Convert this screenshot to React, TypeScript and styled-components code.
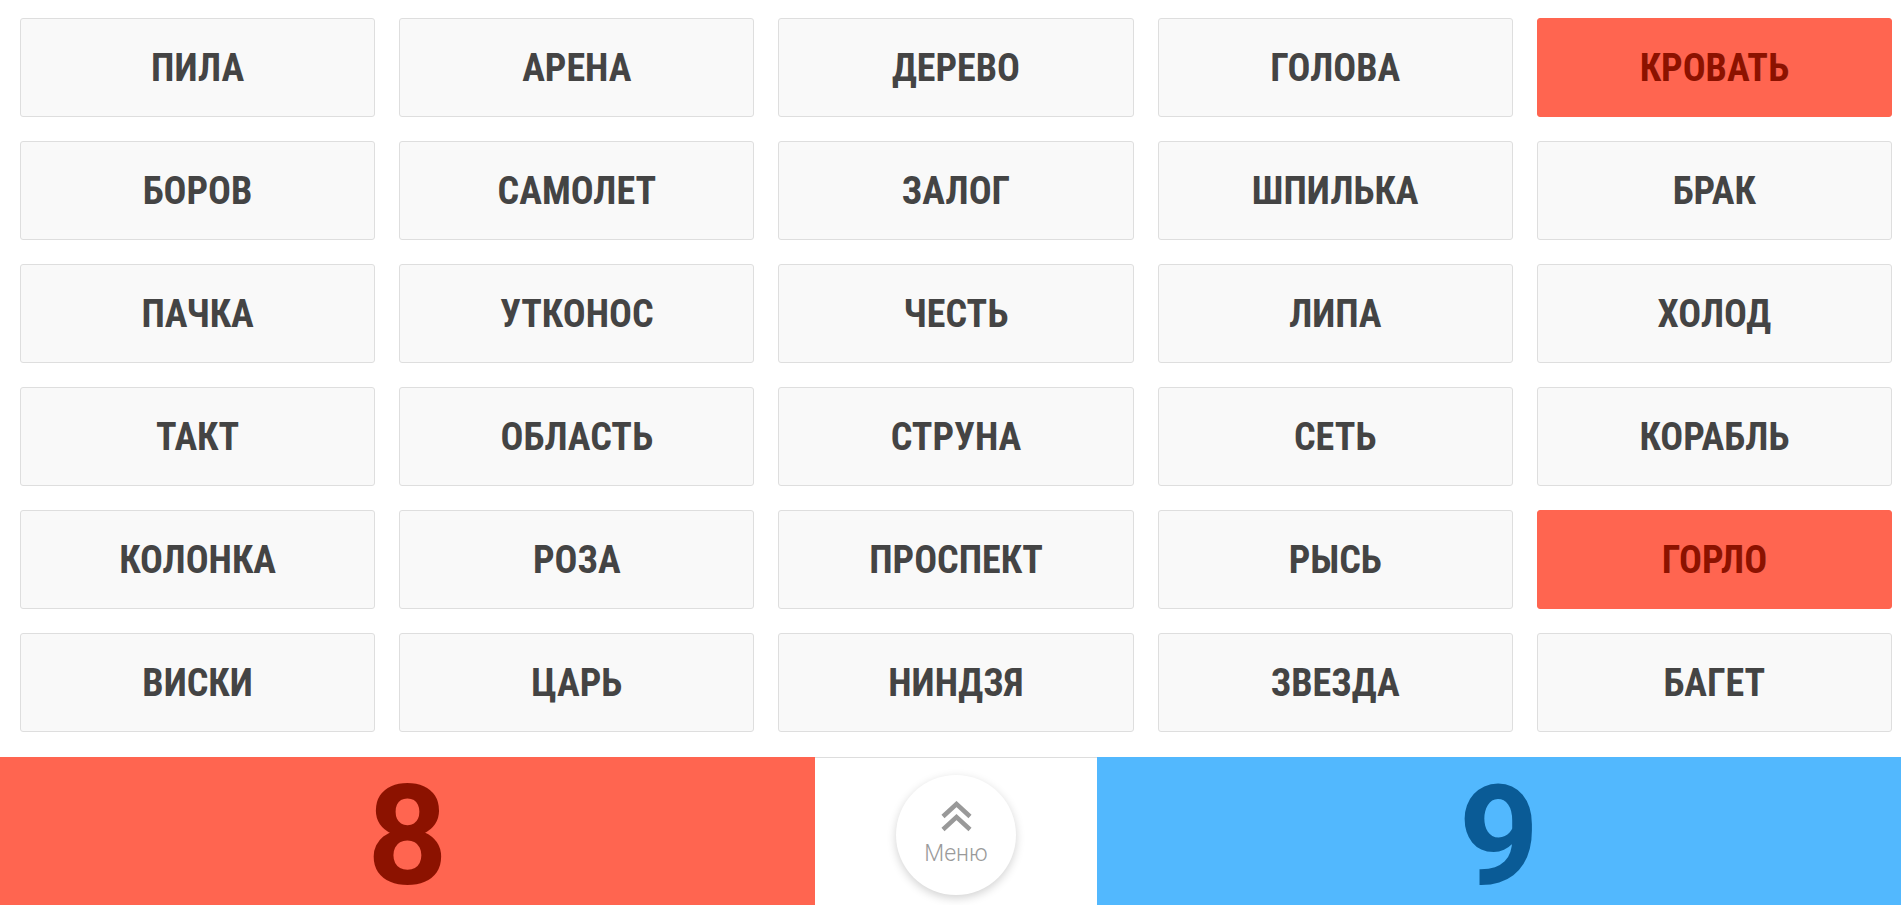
import React from "react";
import styled, { createGlobalStyle } from "styled-components";

type Team = "red" | "blue" | "none";

type Word = {
  text: string,
  team: Team,
};

const GlobalStyle = createGlobalStyle`
  html, body {
    margin: 0;
    padding: 0;
    background: #fff;
    font-family: Roboto, "Noto Sans", sans-serif;
  }
`;

const Page = styled.div`
  display: flex;
  flex-direction: column;
  min-height: 905px;
`;

const Board = styled.div`
  display: grid;
  grid-template-columns: repeat(5, 1fr);
  grid-auto-rows: 99px;
  gap: 24px;
  padding: 18px 9px 25px 20px;
`;

const Card = styled.div<{ $team: Team }>`
  display: flex;
  align-items: center;
  justify-content: center;
  box-sizing: border-box;
  border-radius: 3px;
  border: 1px solid ${p => (p.$team === "red" ? "#ff6550" : "#dedede")};
  background: ${p => (p.$team === "red" ? "#ff6550" : "#f9f9f9")};
  color: ${p => (p.$team === "red" ? "#8c1200" : "#444")};
  font-family: "Roboto Condensed", Roboto, sans-serif;
  font-stretch: condensed;
  font-weight: 700;
  font-size: 38px;
  text-transform: uppercase;
`;

const ScoreBar = styled.div`
  display: grid;
  grid-template-columns: 815px 282px 1fr;
  height: 148px;
`;

const Score = styled.div<{ $team: Team }>`
  display: flex;
  align-items: center;
  justify-content: center;
  box-sizing: border-box;
  padding-top: 10px;
  background: ${p => (p.$team === "red" ? "#ff6550" : "#52b8fe")};
  color: ${p => (p.$team === "red" ? "#8c1200" : "#0a5b96")};
  font-family: Roboto, sans-serif;
  font-weight: 700;
  font-size: 140px;
  line-height: 138px;
`;

const Middle = styled.div`
  display: flex;
  justify-content: center;
  box-sizing: border-box;
  padding-top: 17px;
  border-top: 1px solid #ddd;
  background: #fff;
`;

const MenuButton = styled.button`
  display: flex;
  flex-direction: column;
  align-items: center;
  box-sizing: border-box;
  width: 120px;
  height: 120px;
  padding: 26px 0 0;
  border: none;
  border-radius: 50%;
  background: #fff;
  box-shadow: 0 3px 10px rgba(0, 0, 0, 0.18);
  color: #9a9a9a;
  font-family: Roboto, sans-serif;
  font-weight: 300;
  font-size: 23px;
  cursor: pointer;
`;

const MenuLabel = styled.span`
  margin-top: 10px;
  line-height: 1;
`;

const words: Word[] = [
  { text: "пила", team: "none" },
  { text: "арена", team: "none" },
  { text: "дерево", team: "none" },
  { text: "голова", team: "none" },
  { text: "кровать", team: "red" },
  { text: "боров", team: "none" },
  { text: "самолет", team: "none" },
  { text: "залог", team: "none" },
  { text: "шпилька", team: "none" },
  { text: "брак", team: "none" },
  { text: "пачка", team: "none" },
  { text: "утконос", team: "none" },
  { text: "честь", team: "none" },
  { text: "липа", team: "none" },
  { text: "холод", team: "none" },
  { text: "такт", team: "none" },
  { text: "область", team: "none" },
  { text: "струна", team: "none" },
  { text: "сеть", team: "none" },
  { text: "корабль", team: "none" },
  { text: "колонка", team: "none" },
  { text: "роза", team: "none" },
  { text: "проспект", team: "none" },
  { text: "рысь", team: "none" },
  { text: "горло", team: "red" },
  { text: "виски", team: "none" },
  { text: "царь", team: "none" },
  { text: "ниндзя", team: "none" },
  { text: "звезда", team: "none" },
  { text: "багет", team: "none" },
];

const ChevronsUp = () => (
  <svg width="33" height="31" viewBox="0 0 33 31" fill="none">
    <path
      d="M3 15.5 L16.5 3 L30 15.5 M3 28.5 L16.5 16 L30 28.5"
      stroke="#999"
      strokeWidth="4.5"
    />
  </svg>
);

export default function App() {
  return (
    <Page>
      <GlobalStyle />
      <Board>
        {words.map(w => (
          <Card key={w.text} $team={w.team}>{w.text}</Card>
        ))}
      </Board>
      <ScoreBar>
        <Score $team="red">8</Score>
        <Middle>
          <MenuButton>
            <ChevronsUp />
            <MenuLabel>Меню</MenuLabel>
          </MenuButton>
        </Middle>
        <Score $team="blue">9</Score>
      </ScoreBar>
    </Page>
  );
}
